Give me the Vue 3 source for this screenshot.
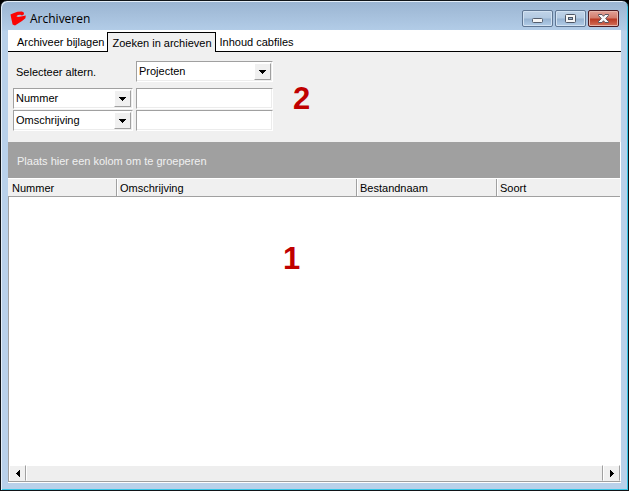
<script setup>
import { ref } from 'vue'

const tabs = ['Archiveer bijlagen', 'Zoeken in archieven', 'Inhoud cabfiles']
const activeTab = ref(1)
const source = ref('Projecten')
const fieldOptions = ['Nummer', 'Omschrijving']
const filters = ref([
  { id: 'filter-1', field: 'Nummer', value: '' },
  { id: 'filter-2', field: 'Omschrijving', value: '' },
])
const columns = [
  { name: 'Nummer', size: 'narrow' },
  { name: 'Omschrijving', size: 'wide' },
  { name: 'Bestandnaam', size: 'medium' },
  { name: 'Soort', size: 'rest' },
]
</script>

<template>
  <div class="window">
    <header class="titlebar">
      <svg class="logo" viewBox="0 0 16 15" aria-hidden="true">
        <path fill="#fb0505" d="M.5 3.4 L4 2 L7.5 .8 L12 .5 L14 1.8 L13.8 3.6 L12 4.6 L10.4 3.8 L8 4 L6.4 5.2 L8 6 L11 5.6 L15.8 4.6 L15.4 7.2 L12 10 L5 14.6 L2.6 13.6 L1.6 9 Z" />
      </svg>
      <h1>Archiveren</h1>
      <div class="controls">
        <button type="button" aria-label="Minimaliseren">
          <svg viewBox="0 0 29 15"><rect x="9.5" y="7.5" width="10" height="4" rx="1" fill="#f6f6f6" stroke="#555e6d" /></svg>
        </button>
        <button type="button" aria-label="Maximaliseren">
          <svg viewBox="0 0 29 15">
            <rect x="9.5" y="3.5" width="10" height="8" rx="1" fill="#f6f6f6" stroke="#4e5665" />
            <rect x="12.5" y="6.5" width="4" height="2" fill="#9bb5d0" stroke="#4e5665" />
          </svg>
        </button>
        <button type="button" class="close" aria-label="Sluiten">
          <svg viewBox="0 0 29 15">
            <path d="M9.5 3.5 H13 L14.5 5.3 L16 3.5 H19.5 V4.5 L16.7 7.5 L19.5 10.5 V11.5 H16 L14.5 9.7 L13 11.5 H9.5 V10.5 L12.3 7.5 L9.5 4.5 Z" fill="#f8f8f8" stroke="#59545f" />
          </svg>
        </button>
      </div>
    </header>

    <main class="client">
      <nav class="tabs" role="tablist">
        <button
          v-for="(tab, i) in tabs"
          :key="tab"
          type="button"
          role="tab"
          class="tab"
          :class="{ active: i === activeTab }"
          :aria-selected="i === activeTab"
          @click="activeTab = i"
        >{{ tab }}</button>
      </nav>

      <form class="search" @submit.prevent>
        <div class="row source">
          <label for="source">Selecteer altern.</label>
          <div class="combo">
            <select id="source" v-model="source"><option>Projecten</option></select>
            <span class="drop"><svg viewBox="0 0 7 4"><path d="M0 0H7V1H6V2H5V3H4V4H3V3H2V2H1V1H0Z" /></svg></span>
          </div>
        </div>
        <div v-for="f in filters" :key="f.id" class="row">
          <div class="combo">
            <select v-model="f.field" :aria-label="'Zoekveld ' + f.field">
              <option v-for="o in fieldOptions" :key="o">{{ o }}</option>
            </select>
            <span class="drop"><svg viewBox="0 0 7 4"><path d="M0 0H7V1H6V2H5V3H4V4H3V3H2V2H1V1H0Z" /></svg></span>
          </div>
          <input :id="f.id" v-model="f.value" type="text" :aria-label="f.field">
        </div>
        <span class="mark mark-form">2</span>
      </form>

      <section class="results">
        <p class="group">Plaats hier een kolom om te groeperen</p>
        <table>
          <thead>
            <tr><th v-for="c in columns" :key="c.name" scope="col" :class="c.size">{{ c.name }}</th></tr>
          </thead>
        </table>
        <div class="grid-body"><span class="mark mark-grid">1</span></div>
        <div class="scrollbar">
          <button type="button" aria-label="Naar links"><svg viewBox="0 0 4 7"><path d="M4 0V7H3V6H2V5H1V4H0V3H1V2H2V1H3V0Z" /></svg></button>
          <div class="thumb"></div>
          <button type="button" aria-label="Naar rechts"><svg viewBox="0 0 4 7"><path d="M0 0V7H1V6H2V5H3V4H4V3H3V2H2V1H1V0Z" /></svg></button>
        </div>
      </section>
    </main>
  </div>
</template>

<style>
body {
  margin: 0;
  background: #000;
}
</style>

<style scoped>
* {
  box-sizing: border-box;
}
.window {
  display: flex;
  flex-direction: column;
  min-height: 100vh;
  padding: 0 7px 7px;
  border: 1px solid #101418;
  border-radius: 7px 7px 0 0;
  background: linear-gradient(#9ab4d1 0, #b2cce7 29px, #b9d1ea 30px);
  box-shadow: inset 1px 1px #e4eef8, inset -1px -1px #35c5e6;
  font: 11px/13px "Liberation Sans", Arial, sans-serif;
  color: #000;
}
button,
select,
input {
  margin: 0;
  padding: 0;
  font: inherit;
  color: inherit;
  border-radius: 0;
  outline: 0;
}
svg {
  display: block;
}
.titlebar {
  display: flex;
  align-items: center;
  height: 29px;
  padding: 5px 2px 0 2px;
}
.logo {
  width: 16px;
  height: 15px;
}
h1 {
  flex: 1;
  margin: 0 0 0 4px;
  padding-top: 2px;
  font: 12px/16px "Open Sans", "Noto Sans", sans-serif;
}
.controls {
  display: flex;
  gap: 2px;
}
.controls button {
  width: 31px;
  height: 17px;
  border: 1px solid #5f7693;
  border-radius: 2px;
  background: linear-gradient(#c0d3e8 0, #b3cae2 7px, #96b2d0 8px, #b2cde8 100%);
  box-shadow: inset 0 0 0 1px #d2e2f2;
}
.controls .close {
  border-color: #4b1c24;
  background: linear-gradient(#e2a197 0, #d37c6c 7px, #b93822 8px, #d3715a 100%);
  box-shadow: inset 0 0 0 1px #e7b5aa;
}
.client {
  flex: 1;
  display: flex;
  flex-direction: column;
  border-bottom: 1px solid #fff;
  background: #f0f0f0;
}
.tabs {
  display: flex;
  align-items: flex-end;
  height: 22px;
  padding-left: 5px;
  background: #fff;
  border-bottom: 1px solid #000;
}
.tab {
  height: 19px;
  padding: 2px 3px 0 4px;
  border: 0;
  background: none;
}
.tab.active {
  height: 20px;
  margin-bottom: -1px;
  border: 1px solid #000;
  border-bottom: 0;
  background: #f0f0f0;
}
.search {
  position: relative;
  display: flex;
  flex-direction: column;
  gap: 1px;
  padding: 9px 5px 11px;
}
.row {
  display: grid;
  grid-template-columns: 120px 137px;
  gap: 3px;
  align-items: center;
}
.source {
  margin-bottom: 5px;
}
.row label {
  padding: 2px 0 0 3px;
}
.combo,
.row input {
  height: 21px;
  border: 1px solid;
  border-color: #a0a0a0 #fff #fff #a0a0a0;
  background: #fff;
  box-shadow: inset -1px -1px #ececec;
}
.row input {
  width: 100%;
  padding: 0 3px;
}
.combo {
  display: grid;
  grid-template-columns: 1fr 17px;
  padding: 1px;
}
.combo select {
  grid-area: 1 / 1 / 2 / 3;
  appearance: none;
  padding: 0 18px 0 1px;
  border: 0;
  background: none;
}
.drop {
  grid-area: 1 / 2;
  display: grid;
  place-items: center;
  border: 1px solid;
  border-color: #fff #a0a0a0 #a0a0a0 #fff;
  background: #f0f0f0;
  pointer-events: none;
}
.drop svg {
  width: 7px;
  height: 4px;
}
.mark {
  position: absolute;
  font: bold 31px/32px "Liberation Sans", Arial, sans-serif;
  color: #c00000;
}
.mark-form {
  top: 31px;
  left: 285px;
}
.results {
  flex: 1;
  display: flex;
  flex-direction: column;
  border-right: 1px solid #fff;
  border-bottom: 1px solid #a0a0a0;
  background: #fff;
}
.group {
  margin: 0;
  padding: 13px 9px 10px;
  background: #a0a0a0;
  color: #f0f0f0;
}
table {
  width: 100%;
  table-layout: fixed;
  border-collapse: separate;
  border-spacing: 0;
  border-top: 1px solid #fff;
  border-bottom: 1px solid #a0a0a0;
}
th {
  height: 17px;
  padding: 3px 4px 1px;
  background: #f0f0f0;
  font-weight: normal;
  text-align: left;
}
th + th {
  padding-left: 3px;
  border-left: 1px solid #a0a0a0;
  box-shadow: inset 1px 0 #fff;
}
.narrow {
  width: 108px;
}
.wide {
  width: 240px;
}
.medium {
  width: 140px;
}
.grid-body {
  flex: 1;
  position: relative;
  border-left: 1px solid #a0a0a0;
}
.mark-grid {
  top: 46px;
  left: 274px;
}
.scrollbar {
  display: flex;
  height: 16px;
  border-left: 1px solid #a0a0a0;
  background: #f0f0f0;
}
.scrollbar button {
  display: grid;
  place-items: center;
  width: 17px;
  border: 1px solid;
  border-color: #fff #a0a0a0 #f0f0f0 #fff;
  background: #f0f0f0;
}
.scrollbar svg {
  width: 4px;
  height: 7px;
}
.thumb {
  flex: 1;
  border: 1px solid;
  border-color: #fff #a0a0a0 #f0f0f0 #fff;
  background: #eee;
}
</style>
